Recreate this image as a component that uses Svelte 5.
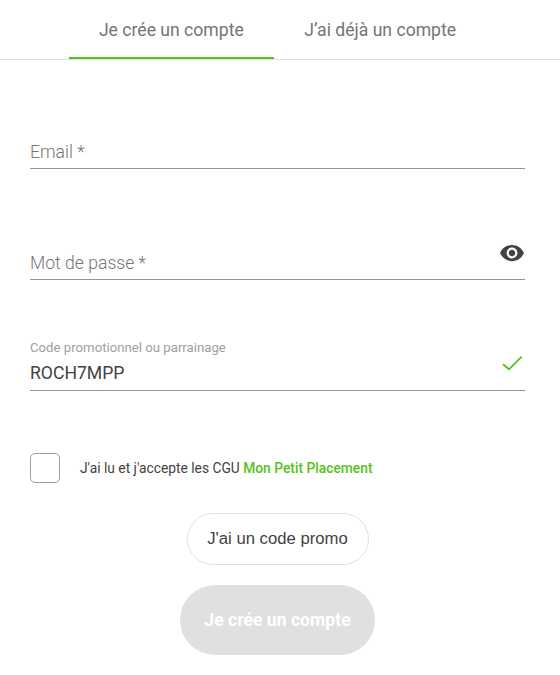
<script lang="ts">
  let activeTab = $state('signup');
  let accepted = $state(false);
  let showPassword = $state(false);
  let promo = $state('ROCH7MPP');
</script>

<div class="page">
  <nav class="tabs">
    <button class="tab" class:active={activeTab === 'signup'} onclick={() => (activeTab = 'signup')}>Je crée un compte</button>
    <button class="tab" class:active={activeTab === 'login'} onclick={() => (activeTab = 'login')}>J’ai déjà un compte</button>
  </nav>

  <form class="form" onsubmit={(e) => e.preventDefault()}>
    <div class="field">
      <span class="placeholder">Email *</span>
    </div>

    <div class="field">
      <span class="placeholder">Mot de passe *</span>
      <button type="button" class="field-icon eye" aria-label="Afficher le mot de passe" onclick={() => (showPassword = !showPassword)}>
        <svg viewBox="0 0 24 24" width="26" height="26" fill="currentColor">
          <path d="M12 4.5C7 4.5 2.73 7.61 1 12c1.73 4.39 6 7.5 11 7.5s9.27-3.11 11-7.5c-1.73-4.39-6-7.5-11-7.5zM12 17c-2.76 0-5-2.24-5-5s2.24-5 5-5 5 2.24 5 5-2.24 5-5 5zm0-8c-1.66 0-3 1.34-3 3s1.34 3 3 3 3-1.34 3-3-1.34-3-3-3z"/>
        </svg>
      </button>
    </div>

    <div class="field filled">
      <span class="float-label">Code promotionnel ou parrainage</span>
      <span class="value">{promo}</span>
      <span class="field-icon check">
        <svg viewBox="0 0 24 24" width="24" height="24" fill="none" stroke="currentColor" stroke-width="1.8">
          <polyline points="2 13.3 8 18.3 20.7 5.7"/>
        </svg>
      </span>
    </div>

    <label class="terms">
      <input type="checkbox" bind:checked={accepted} />
      <span>J'ai lu et j'accepte les CGU <b>Mon Petit Placement</b></span>
    </label>

    <div class="actions">
      <button type="button" class="btn-promo">J'ai un code promo</button>
      <button type="submit" class="btn-submit" disabled={!accepted}>Je crée un compte</button>
    </div>
  </form>
</div>

<style>
  :global(body) {
    background: #fff;
    font-family: Roboto, "Liberation Sans", sans-serif;
  }

  .page {
    height: 675px;
    overflow: hidden;
  }

  .tabs {
    display: flex;
    justify-content: center;
    height: 60px;
    padding-right: 5px;
    border-bottom: 1px solid #e0e0e0;
    box-sizing: border-box;
  }

  .tab {
    padding: 2px 30.25px 0;
    height: 59px;
    background: none;
    border: none;
    border-bottom: 2px solid transparent;
    color: #757575;
    font-family: inherit;
    font-size: 17.6px;
    font-weight: 400;
    cursor: pointer;
  }

  .tab.active {
    border-bottom-color: #52c41a;
  }

  .form {
    padding: 53px 35px 0 30px;
  }

  .field {
    position: relative;
    height: 51px;
    margin-bottom: 55px;
    border-bottom: 1px solid #949494;
    display: flex;
    flex-direction: column;
    justify-content: flex-end;
    padding-bottom: 4px;
    box-sizing: content-box;
  }

  .placeholder {
    color: #757575;
    font-size: 17.6px;
    font-weight: 300;
    line-height: 24px;
  }

  .float-label {
    color: #9e9e9e;
    font-size: 13.2px;
    line-height: 16px;
    margin-bottom: 5px;
  }

  .value {
    color: #424242;
    font-size: 17.6px;
    line-height: 24px;
  }

  .field.filled {
    height: 50px;
    padding-bottom: 5px;
  }

  .field-icon {
    position: absolute;
    right: 0;
    padding: 0;
    background: none;
    border: none;
    display: block;
    line-height: 0;
  }

  .eye {
    top: 16px;
    color: #424242;
    cursor: pointer;
  }

  .check {
    top: 16px;
    color: #52c41a;
  }

  .terms {
    display: flex;
    align-items: center;
    gap: 20px;
    margin-top: 62px;
    color: #424242;
    font-size: 13.8px;
  }

  .terms input {
    appearance: none;
    width: 30px;
    height: 30px;
    margin: 0;
    border: 1px solid #9e9e9e;
    border-radius: 5px;
    box-sizing: border-box;
  }

  .terms b {
    color: #52c41a;
    font-weight: 500;
  }

  .actions {
    display: flex;
    flex-direction: column;
    align-items: center;
    gap: 20px;
    margin-top: 30px;
  }

  .btn-promo {
    width: 182px;
    height: 52px;
    background: #fff;
    border: 1px solid #e0e0e0;
    border-radius: 26px;
    color: #424242;
    font-family: "Liberation Sans", Arial, sans-serif;
    font-size: 16.7px;
    cursor: pointer;
  }

  .btn-submit {
    width: 195px;
    height: 70px;
    background: #e0e0e0;
    border: none;
    border-radius: 35px;
    color: #fff;
    font-family: inherit;
    font-size: 17.6px;
    font-weight: 700;
  }
</style>
